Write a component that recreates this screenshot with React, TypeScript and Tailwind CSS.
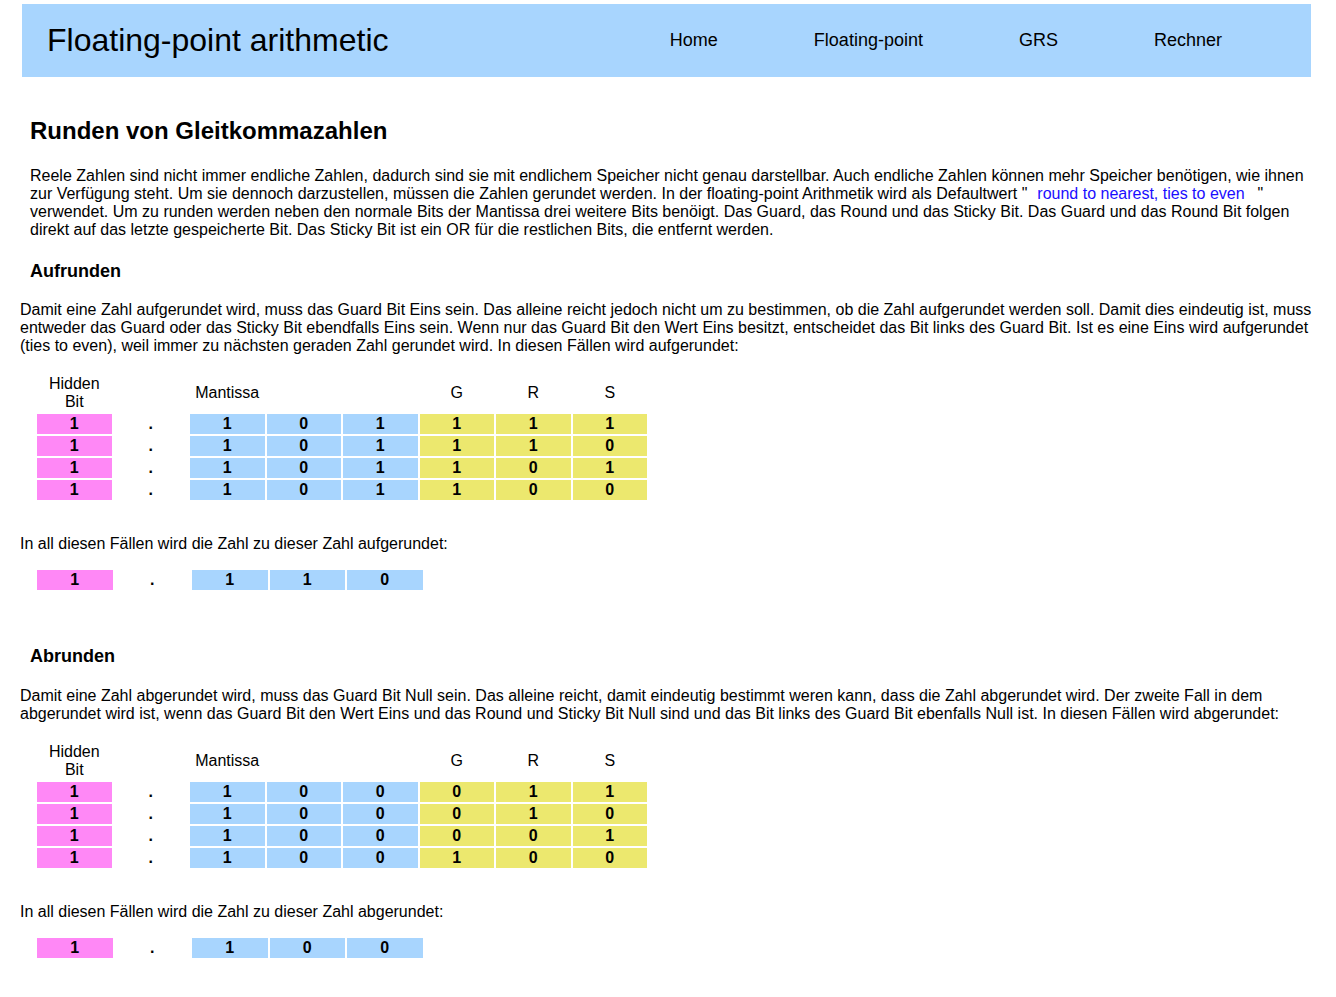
import React from 'react';

const PINK = 'bg-[#ff88f6]';
const BLUE = 'bg-[#a8d5fe]';
const YELLOW = 'bg-[#ece86e]';

type Row = { m: string[]; g: string; r: string; s: string };

const upRows: Row[] = [
  { m: ['1', '0', '1'], g: '1', r: '1', s: '1' },
  { m: ['1', '0', '1'], g: '1', r: '1', s: '0' },
  { m: ['1', '0', '1'], g: '1', r: '0', s: '1' },
  { m: ['1', '0', '1'], g: '1', r: '0', s: '0' },
];

const downRows: Row[] = [
  { m: ['1', '0', '0'], g: '0', r: '1', s: '1' },
  { m: ['1', '0', '0'], g: '0', r: '1', s: '0' },
  { m: ['1', '0', '0'], g: '0', r: '0', s: '1' },
  { m: ['1', '0', '0'], g: '1', r: '0', s: '0' },
];

function Cell({ color, children }: { color?: string; children: React.ReactNode }) {
  return (
    <div className={`h-[20px] flex items-center justify-center font-bold text-[16px] leading-none ${color ?? ''}`}>
      {children}
    </div>
  );
}

function BitTable({ rows }: { rows: Row[] }) {
  return (
    <div className="ml-[17px] grid grid-cols-[repeat(8,74.5px)] gap-x-[2px] gap-y-[2px]">
      <div className="h-[39px] flex items-center justify-center text-center leading-[18px]">Hidden<br />Bit</div>
      <div />
      <div className="h-[39px] flex items-center justify-center whitespace-nowrap">Mantissa</div>
      <div />
      <div />
      <div className="h-[39px] flex items-center justify-center">G</div>
      <div className="h-[39px] flex items-center justify-center">R</div>
      <div className="h-[39px] flex items-center justify-center">S</div>
      {rows.map((row, i) => (
        <React.Fragment key={i}>
          <Cell color={PINK}>1</Cell>
          <Cell>.</Cell>
          {row.m.map((b, j) => (
            <Cell key={j} color={BLUE}>{b}</Cell>
          ))}
          <Cell color={YELLOW}>{row.g}</Cell>
          <Cell color={YELLOW}>{row.r}</Cell>
          <Cell color={YELLOW}>{row.s}</Cell>
        </React.Fragment>
      ))}
    </div>
  );
}

function ResultTable({ bits }: { bits: string[] }) {
  return (
    <div className="ml-[17px] grid grid-cols-[repeat(5,75.5px)] gap-x-[2px]">
      <Cell color={PINK}>1</Cell>
      <Cell>.</Cell>
      {bits.map((b, i) => (
        <Cell key={i} color={BLUE}>{b}</Cell>
      ))}
    </div>
  );
}

export default function App() {
  return (
    <div className="min-h-screen bg-white text-black text-[16px] font-['Liberation_Sans',Arial,sans-serif] pt-[4px] pb-[40px]">
      <header className="ml-[22px] mr-[25px] h-[73px] bg-[#a8d5fe] flex items-center justify-between">
        <h1 className="pl-[25px] pb-[1px] text-[32px] leading-none">Floating-point arithmetic</h1>
        <nav className="flex gap-[96px] mr-[89px] text-[18px]">
          <span>Home</span>
          <span>Floating-point</span>
          <span>GRS</span>
          <span>Rechner</span>
        </nav>
      </header>

      <div className="px-[20px]">
        <h2 className="mt-[40px] px-[10px] text-[24px] leading-[28px] font-bold">Runden von Gleitkommazahlen</h2>
        <p className="mt-[22px] px-[10px] leading-[18px]">
          Reele Zahlen sind nicht immer endliche Zahlen, dadurch sind sie mit endlichem Speicher nicht genau darstellbar. Auch endliche Zahlen können mehr Speicher benötigen, wie ihnen zur Verfügung steht. Um sie dennoch darzustellen, müssen die Zahlen gerundet werden. In der floating-point Arithmetik wird als Defaultwert "
          <span className="text-[#1a0dff] pl-[10px] pr-[13px]">round to nearest, ties to even</span>
          " verwendet. Um zu runden werden neben den normale Bits der Mantissa drei weitere Bits benöigt. Das Guard, das Round und das Sticky Bit. Das Guard und das Round Bit folgen direkt auf das letzte gespeicherte Bit. Das Sticky Bit ist ein OR für die restlichen Bits, die entfernt werden.
        </p>

        <h3 className="mt-[22px] px-[10px] text-[18px] leading-[21px] font-bold">Aufrunden</h3>
        <p className="mt-[19px] leading-[18px]">
          Damit eine Zahl aufgerundet wird, muss das Guard Bit Eins sein. Das alleine reicht jedoch nicht um zu bestimmen, ob die Zahl aufgerundet werden soll. Damit dies eindeutig ist, muss entweder das Guard oder das Sticky Bit ebendfalls Eins sein. Wenn nur das Guard Bit den Wert Eins besitzt, entscheidet das Bit links des Guard Bit. Ist es eine Eins wird aufgerundet (ties to even), weil immer zu nächsten geraden Zahl gerundet wird. In diesen Fällen wird aufgerundet:
        </p>
        <div className="mt-[18px]">
          <BitTable rows={upRows} />
        </div>
        <p className="mt-[35px] leading-[18px]">In all diesen Fällen wird die Zahl zu dieser Zahl aufgerundet:</p>
        <div className="mt-[17px]">
          <ResultTable bits={['1', '1', '0']} />
        </div>

        <h3 className="mt-[56px] px-[10px] text-[18px] leading-[21px] font-bold">Abrunden</h3>
        <p className="mt-[20px] leading-[18px]">
          Damit eine Zahl abgerundet wird, muss das Guard Bit Null sein. Das alleine reicht, damit eindeutig bestimmt weren kann, dass die Zahl abgerundet wird. Der zweite Fall in dem abgerundet wird ist, wenn das Guard Bit den Wert Eins und das Round und Sticky Bit Null sind und das Bit links des Guard Bit ebenfalls Null ist. In diesen Fällen wird abgerundet:
        </p>
        <div className="mt-[18px]">
          <BitTable rows={downRows} />
        </div>
        <p className="mt-[35px] leading-[18px]">In all diesen Fällen wird die Zahl zu dieser Zahl abgerundet:</p>
        <div className="mt-[17px]">
          <ResultTable bits={['1', '0', '0']} />
        </div>
      </div>
    </div>
  );
}
